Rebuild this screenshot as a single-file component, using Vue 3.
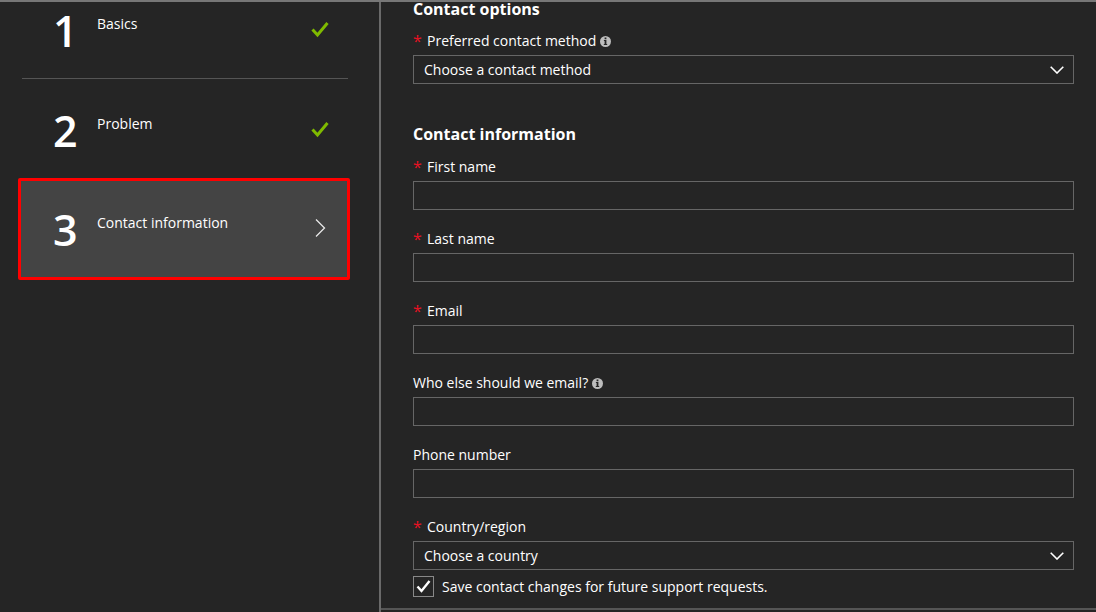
<script setup>
import { reactive, ref } from 'vue'

const steps = [
  { number: 1, title: 'Basics', done: true },
  { number: 2, title: 'Problem', done: true },
  { number: 3, title: 'Contact information', done: false },
]

const current = ref(3)

const fields = [
  { id: 'first-name', label: 'First name', type: 'text', required: true },
  { id: 'last-name', label: 'Last name', type: 'text', required: true },
  { id: 'email', label: 'Email', type: 'email', required: true },
  { id: 'cc', label: 'Who else should we email?', type: 'text', info: true },
  { id: 'phone', label: 'Phone number', type: 'tel' },
]

const form = reactive({
  method: '',
  'first-name': '',
  'last-name': '',
  email: '',
  cc: '',
  phone: '',
  country: '',
  save: true,
})
</script>

<template>
  <div class="page">
    <nav class="sidebar" aria-label="Request steps">
      <ol class="steps">
        <li v-for="step in steps" :key="step.number">
          <button
            type="button"
            class="step"
            :class="{ active: step.number === current }"
            @click="current = step.number"
          >
            <span class="number">{{ step.number }}</span>
            <span class="title">{{ step.title }}</span>
            <svg v-if="step.done" class="state" viewBox="0 0 20 20" aria-hidden="true">
              <path d="M2.5 10.5 L7.5 16 L17.5 4" fill="none" stroke="#7fba00" stroke-width="3" />
            </svg>
            <svg v-else class="state" viewBox="0 0 20 20" aria-hidden="true">
              <path d="M6 1.5 L14.5 10 L6 18.5" fill="none" stroke="#e8e8e8" stroke-width="1.3" />
            </svg>
          </button>
        </li>
      </ol>
    </nav>

    <main class="content">
      <form class="form" @submit.prevent>
        <h2>Contact options</h2>
        <div class="field">
          <div class="label-row">
            <span class="star">*</span>
            <label for="method">Preferred contact method</label>
            <svg class="info" viewBox="0 0 11 11" aria-hidden="true">
              <circle cx="5.5" cy="5.5" r="5.5" fill="#bdbdbd" />
              <path d="M4.6 1.6h1.8v1.6H4.6zM3.9 4.1h2.5v4h.8v1H3.8v-1h.8V5.1h-.7z" fill="#252525" />
            </svg>
          </div>
          <div class="select">
            <select id="method" v-model="form.method">
              <option value="">Choose a contact method</option>
            </select>
            <svg class="chevron" viewBox="0 0 14 8" aria-hidden="true">
              <path d="M.7 .7 L7 7 L13.3 .7" fill="none" stroke="#fff" stroke-width="1.6" />
            </svg>
          </div>
        </div>

        <h2 class="second">Contact information</h2>
        <div v-for="f in fields" :key="f.id" class="field">
          <div class="label-row">
            <span v-if="f.required" class="star">*</span>
            <label :for="f.id">{{ f.label }}</label>
            <svg v-if="f.info" class="info" viewBox="0 0 11 11" aria-hidden="true">
              <circle cx="5.5" cy="5.5" r="5.5" fill="#bdbdbd" />
              <path d="M4.6 1.6h1.8v1.6H4.6zM3.9 4.1h2.5v4h.8v1H3.8v-1h.8V5.1h-.7z" fill="#252525" />
            </svg>
          </div>
          <input :id="f.id" v-model="form[f.id]" class="box" :type="f.type" />
        </div>
        <div class="field">
          <div class="label-row">
            <span class="star">*</span>
            <label for="country">Country/region</label>
          </div>
          <div class="select">
            <select id="country" v-model="form.country">
              <option value="">Choose a country</option>
            </select>
            <svg class="chevron" viewBox="0 0 14 8" aria-hidden="true">
              <path d="M.7 .7 L7 7 L13.3 .7" fill="none" stroke="#fff" stroke-width="1.6" />
            </svg>
          </div>
        </div>

        <label class="save">
          <span class="check">
            <input v-model="form.save" type="checkbox" />
            <svg v-if="form.save" class="tick" viewBox="0 0 15 15" aria-hidden="true">
              <path d="M1.5 7.5 L5.5 12 L13.5 2" fill="none" stroke="#fff" stroke-width="2.4" />
            </svg>
          </span>
          <span>Save contact changes for future support requests.</span>
        </label>
      </form>
    </main>
  </div>
</template>

<style>
body {
  margin: 0;
  background: #252525;
}
</style>

<style scoped>
.page {
  box-sizing: border-box;
  display: grid;
  grid-template-columns: 379px 1fr;
  min-height: 100vh;
  border-top: 2px solid #777;
  background: #252525;
  color: #fff;
  font-family: "Open Sans", "Noto Sans", sans-serif;
  font-size: 14px;
  line-height: 20px;
}

.steps {
  list-style: none;
  margin: -23px 0 0;
  padding: 0 29px 0 18px;
}

.step {
  position: relative;
  box-sizing: border-box;
  display: grid;
  grid-template-columns: 43px 1fr 20px;
  align-items: start;
  width: 100%;
  height: 100px;
  padding: 35px 20px 0 36px;
  border: 0;
  background: transparent;
  color: inherit;
  font: inherit;
  text-align: left;
}

.step::after {
  content: "";
  position: absolute;
  right: 2px;
  bottom: 0;
  left: 4px;
  border-bottom: 1px solid #555;
}

.step.active {
  height: 102px;
  margin-top: -1px;
  padding: 32px 17px 0 33px;
  border: 3px solid #f00;
  border-radius: 2px;
  background: #444;
}

.step.active::after,
li:nth-child(2) .step::after {
  display: none;
}

.number {
  font-size: 43px;
  font-weight: 600;
  line-height: 34px;
  margin-left: -1px;
}

.state {
  width: 20px;
  height: 20px;
  margin-top: 5px;
}

.content {
  min-width: 0;
  border-left: 2px solid #6a6a6a;
}

.form {
  padding: 0 22px 11px 32px;
  border-bottom: 2px solid #555;
}

h2 {
  margin: 0 0 15px;
  font-size: 16px;
  font-weight: 700;
  line-height: 14px;
}

h2.second {
  margin: 43px 0 16px;
}

.field + .field {
  margin-top: 19px;
}

.label-row {
  display: flex;
  align-items: center;
  height: 20px;
  margin-bottom: 4px;
}

.star {
  width: 14px;
  color: #e81123;
  font-size: 16px;
}

.info {
  width: 11px;
  height: 11px;
  margin-left: 4px;
}

.box,
select {
  display: block;
  box-sizing: border-box;
  width: 100%;
  height: 29px;
  margin: 0;
  padding: 0 10px;
  border: 1px solid #666;
  border-radius: 0;
  background: #252525;
  color: #fff;
  font: inherit;
  appearance: none;
}

.select {
  position: relative;
}

.chevron {
  position: absolute;
  top: 11px;
  right: 10px;
  width: 14px;
  height: 8px;
  pointer-events: none;
}

.save {
  display: flex;
  align-items: center;
  gap: 8px;
  margin-top: 6px;
}

.check {
  position: relative;
  display: flex;
}

.check input {
  box-sizing: border-box;
  width: 21px;
  height: 21px;
  margin: 0;
  border: 1px solid #888;
  background: #252525;
  appearance: none;
}

.tick {
  position: absolute;
  top: 3px;
  left: 3px;
  width: 15px;
  height: 15px;
  pointer-events: none;
}
</style>
